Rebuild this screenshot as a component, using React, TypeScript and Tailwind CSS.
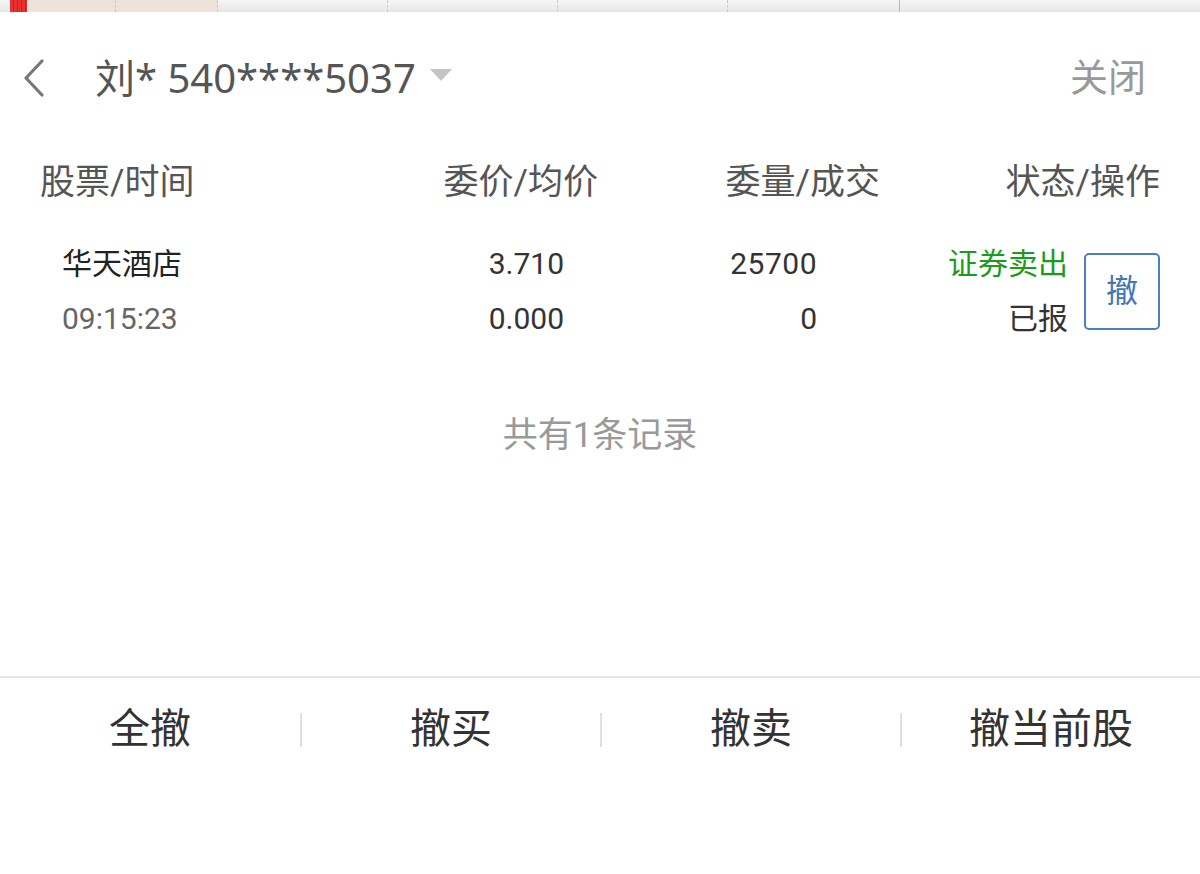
import React from 'react';

const font = "font-['Roboto','Noto_Sans_CJK_SC',sans-serif]";

const App: React.FC = () => {
  return (
    <div className={`w-[1200px] h-[874px] bg-white overflow-hidden ${font}`}>
      {/* top strip from the page below */}
      <div className="flex h-[12px] bg-gradient-to-b from-[#f6f6f6] to-[#e6e6e6]">
        <div className="w-[10px]" />
        <div className="w-[17px] bg-[repeating-linear-gradient(90deg,#e8302f_0px,#e8302f_3px,#c82020_3px,#c82020_4px)]" />
        <div className="w-[89px] bg-[#efe2d9] border-r border-dashed border-[#cfc7c2]" />
        <div className="w-[102px] bg-[#efe2d9] border-r border-dashed border-[#cccccc]" />
        <div className="w-[170px] border-r border-dashed border-[#cccccc]" />
        <div className="w-[170px] border-r border-dashed border-[#cccccc]" />
        <div className="w-[170px] border-r border-dashed border-[#cccccc]" />
        <div className="w-[172px] border-r border-[#bbbbbb]" />
        <div className="flex-1" />
      </div>

      <div className="h-[664px] flex flex-col">
        {/* header */}
        <div className="h-[132px] flex items-center pl-[22px] pr-[54px]">
          <svg width="24" height="38" viewBox="0 0 24 38" className="shrink-0">
            <path d="M20 2 L4 19 L20 36" fill="none" stroke="#777" strokeWidth="3.2" strokeLinecap="round" strokeLinejoin="round" />
          </svg>
          <div className="ml-[49px] text-[40px] leading-none text-[#555] font-['Noto_Sans','Noto_Sans_CJK_SC',sans-serif]">
            刘* 540****5037
          </div>
          <svg width="22" height="13" viewBox="0 0 22 13" className="ml-[14px] mt-[-6px] shrink-0">
            <path d="M0 0 L22 0 L11 12 Z" fill="#c4c4c4" />
          </svg>
          <div className="ml-auto text-[38px] leading-none text-[#999]">关闭</div>
        </div>

        {/* column headers */}
        <div className="h-[78px] flex items-center px-[40px] text-[35px] text-[#555]">
          <div className="w-[300px]">股票/时间</div>
          <div className="w-[258px] text-right">委价/均价</div>
          <div className="w-[282px] text-right">委量/成交</div>
          <div className="flex-1 text-right">状态/操作</div>
        </div>

        {/* record row */}
        <div className="flex items-center pt-[14px] pl-[62px] text-[30px]">
          <div className="w-[280px]">
            <div className="h-[55px] flex items-center text-[#222]">华天酒店</div>
            <div className="h-[55px] flex items-center text-[#666]">09:15:23</div>
          </div>
          <div className="w-[222px] text-right text-[#333]">
            <div className="h-[55px] flex items-center justify-end">3.710</div>
            <div className="h-[55px] flex items-center justify-end">0.000</div>
          </div>
          <div className="w-[253px] text-right text-[#333]">
            <div className="h-[55px] flex items-center justify-end tracking-[0.5px]">25700</div>
            <div className="h-[55px] flex items-center justify-end">0</div>
          </div>
          <div className="w-[251px] text-right">
            <div className="h-[55px] flex items-center justify-end text-[#1c9a1c]">证券卖出</div>
            <div className="h-[55px] flex items-center justify-end text-[#333]">已报</div>
          </div>
          <button className="ml-[16px] w-[76px] h-[77px] border-2 border-[#4a80be] rounded-[5px] text-[32px] text-[#3f78b8] flex items-center justify-center">
            撤
          </button>
        </div>

        <div className="mt-[65px] h-[50px] flex items-center justify-center text-[35px] text-[#999]">
          共有1条记录
        </div>
      </div>

      {/* bottom actions */}
      <div className="border-t-2 border-[#e6e6e6] h-[106px] flex items-center">
        {['全撤', '撤买', '撤卖', '撤当前股'].map((label, i) => (
          <div key={label} className="flex-1 flex items-center h-full">
            {i > 0 && <div className="w-[2px] h-[34px] bg-[#e0e0e0]" />}
            <div className="flex-1 text-center text-[41px] text-[#333]">{label}</div>
          </div>
        ))}
      </div>
    </div>
  );
};

export default App;
